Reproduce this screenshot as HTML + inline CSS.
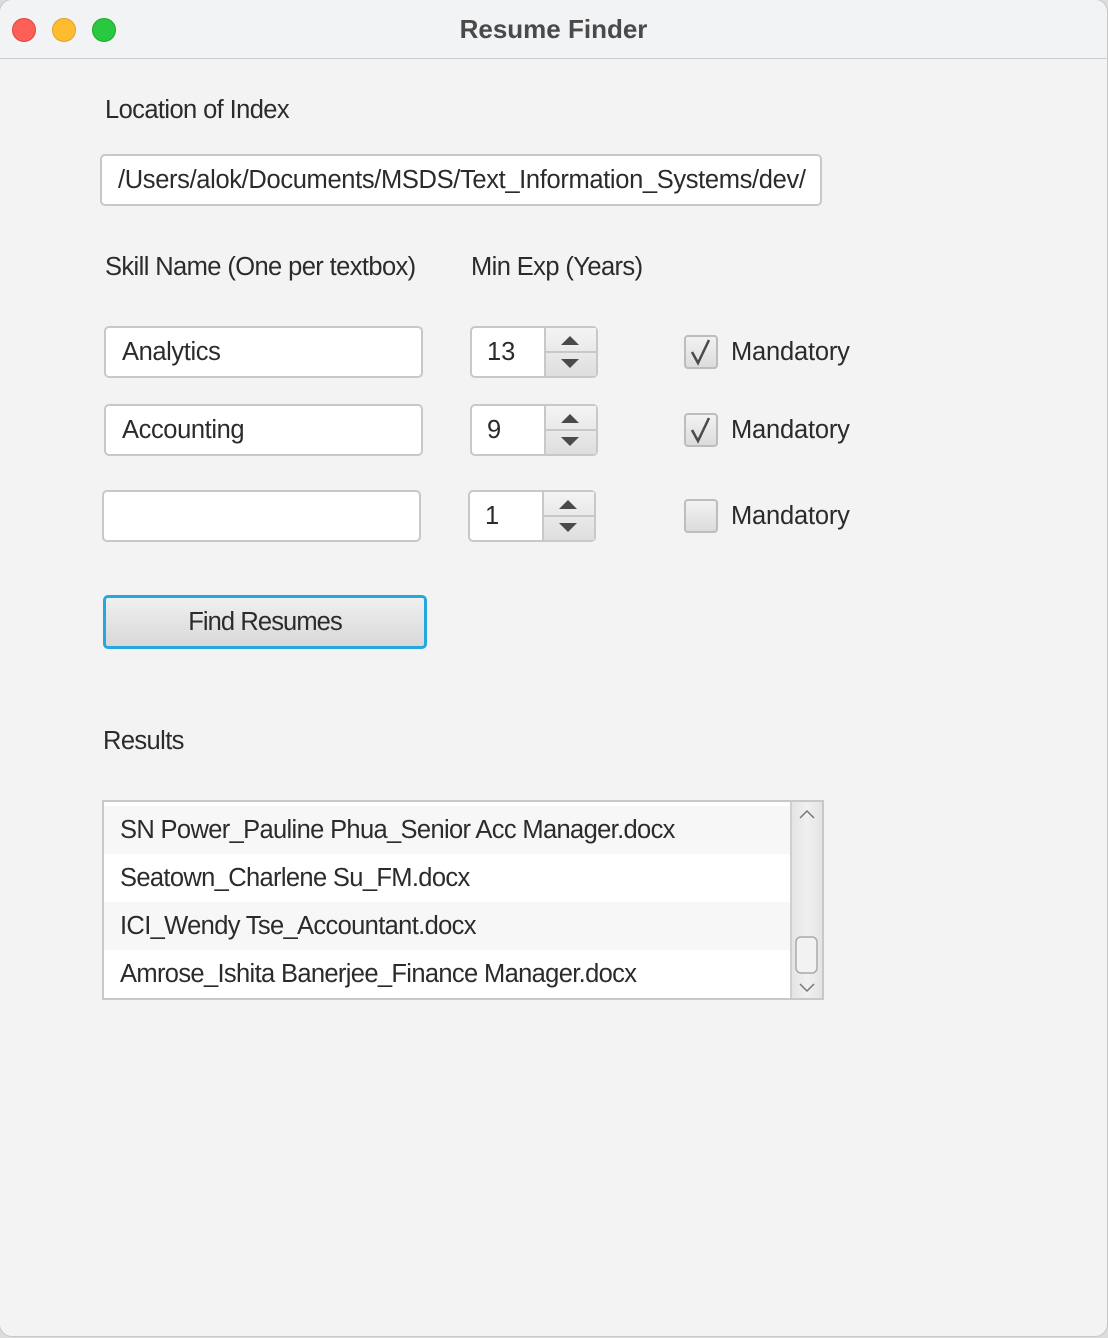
<!DOCTYPE html>
<html><head><style>
body{margin:0;width:1108px;height:1338px;background:#dcdcdc;position:relative;overflow:hidden;font-family:"Liberation Sans",sans-serif;color:#2b2b2b}
.win{position:absolute;left:0;top:0;width:1107px;height:1336px;background:#f3f3f3;border-radius:12px;overflow:hidden;box-shadow:0 0 0 1px #c8c8c8}
.title{position:absolute;left:0;top:0;width:100%;height:58px;background:#f2f3f4;border-bottom:1px solid #cdcdcd;text-align:center;line-height:58px;font-weight:bold;font-size:26px;color:#4a4a4a}
.dot{position:absolute;top:18px;width:24px;height:24px;border-radius:50%}
.a{position:absolute;font-size:25.5px;letter-spacing:-0.6px;white-space:nowrap}
.tf{position:absolute;background:#fff;border:2px solid #c8c8c8;border-radius:5px;box-sizing:border-box;font-size:25.5px;letter-spacing:-0.4px;padding-left:16px;display:flex;align-items:center;white-space:nowrap;overflow:hidden}
.sp{position:absolute;width:128px;height:52px;border:2px solid #c8c8c8;border-radius:5px;box-sizing:border-box;background:#fff;font-size:25.5px}
.sp span{position:absolute;left:15px;top:10px}
.sp .b{position:absolute;right:0;top:0;width:50px;height:48px;border-left:2px solid #c8c8c8;background:linear-gradient(#f4f4f4,#dedede)}
.sp .b:after{content:"";position:absolute;left:0;right:0;top:23px;height:2px;background:#c8c8c8}
.up{position:absolute;left:15px;top:8px;border-left:9px solid transparent;border-right:9px solid transparent;border-bottom:9px solid #4a4a4a}
.dn{position:absolute;left:15px;top:31px;border-left:9px solid transparent;border-right:9px solid transparent;border-top:9px solid #4a4a4a}
.cb{position:absolute;width:34px;height:34px;border:2px solid #bdbdbd;border-radius:4px;box-sizing:border-box;background:linear-gradient(#f2f2f2,#dcdcdc)}
.row{height:48px;line-height:48px;padding-left:16px;font-size:25.5px;letter-spacing:-0.65px;white-space:nowrap}
</style></head><body>
<div class="win">
<div class="title">Resume Finder</div>
<div class="dot" style="left:12px;background:#fe5f57;border:1px solid #e0443e;box-sizing:border-box"></div>
<div class="dot" style="left:52px;background:#febc2e;border:1px solid #dea123;box-sizing:border-box"></div>
<div class="dot" style="left:92px;background:#28c840;border:1px solid #1aab29;box-sizing:border-box"></div>

<div class="a" style="left:105px;top:96px">Location of Index</div>
<div class="tf" style="left:100px;top:154px;width:722px;height:52px;letter-spacing:-0.35px">/Users/alok/Documents/MSDS/Text_Information_Systems/dev/</div>

<div class="a" style="left:105px;top:253px">Skill Name (One per textbox)</div>
<div class="a" style="left:471px;top:253px">Min Exp (Years)</div>

<div class="tf" style="left:104px;top:326px;width:319px;height:52px">Analytics</div>
<div class="tf" style="left:104px;top:404px;width:319px;height:52px">Accounting</div>
<div class="tf" style="left:102px;top:490px;width:319px;height:52px"></div>

<div class="sp" style="left:470px;top:326px"><span>13</span><div class="b"><i class="up"></i><i class="dn"></i></div></div>
<div class="sp" style="left:470px;top:404px"><span>9</span><div class="b"><i class="up"></i><i class="dn"></i></div></div>
<div class="sp" style="left:468px;top:490px"><span>1</span><div class="b"><i class="up"></i><i class="dn"></i></div></div>

<div class="cb" style="left:684px;top:335px"><svg width="30" height="30" style="position:absolute;left:0;top:0"><path d="M6 15 L12 26 L23 3" fill="none" stroke="#4a4a4a" stroke-width="2.5"/></svg></div>
<div class="cb" style="left:684px;top:413px"><svg width="30" height="30" style="position:absolute;left:0;top:0"><path d="M6 15 L12 26 L23 3" fill="none" stroke="#4a4a4a" stroke-width="2.5"/></svg></div>
<div class="cb" style="left:684px;top:499px"></div>
<div class="a" style="left:731px;top:338px;letter-spacing:-0.2px">Mandatory</div>
<div class="a" style="left:731px;top:416px;letter-spacing:-0.2px">Mandatory</div>
<div class="a" style="left:731px;top:502px;letter-spacing:-0.2px">Mandatory</div>

<div style="position:absolute;left:103px;top:595px;width:324px;height:54px;box-sizing:border-box;border:3px solid #27a7e0;border-radius:5px;background:linear-gradient(#f0f0f0,#d8d8d8);text-align:center;line-height:48px;font-size:25.5px;letter-spacing:-0.9px">Find Resumes</div>

<div class="a" style="left:103px;top:727px">Results</div>

<div style="position:absolute;left:102px;top:800px;width:722px;height:200px;border:2px solid #c8c8c8;box-sizing:border-box;background:#fff">
<div style="position:absolute;left:0;top:4px;width:689px">
<div class="row" style="background:#f7f7f7">SN Power_Pauline Phua_Senior Acc Manager.docx</div>
<div class="row" style="background:#fff">Seatown_Charlene Su_FM.docx</div>
<div class="row" style="background:#f7f7f7">ICI_Wendy Tse_Accountant.docx</div>
<div class="row" style="background:#fff">Amrose_Ishita Banerjee_Finance Manager.docx</div>
</div>
<div style="position:absolute;right:0;top:0;width:30px;height:196px;border-left:2px solid #d0d0d0;background:linear-gradient(90deg,#e4e4e4,#f0f0f0,#e4e4e4)">
<svg width="30" height="196" style="position:absolute;left:0;top:0"><path d="M8 16 L15 9 L22 16" fill="none" stroke="#777" stroke-width="1.5"/><path d="M8 182 L15 189 L22 182" fill="none" stroke="#777" stroke-width="1.5"/><rect x="4" y="135" width="21" height="36" rx="5" fill="#f2f2f2" stroke="#aaa" stroke-width="1.5"/></svg>
</div>
</div>
</div>
</body></html>
